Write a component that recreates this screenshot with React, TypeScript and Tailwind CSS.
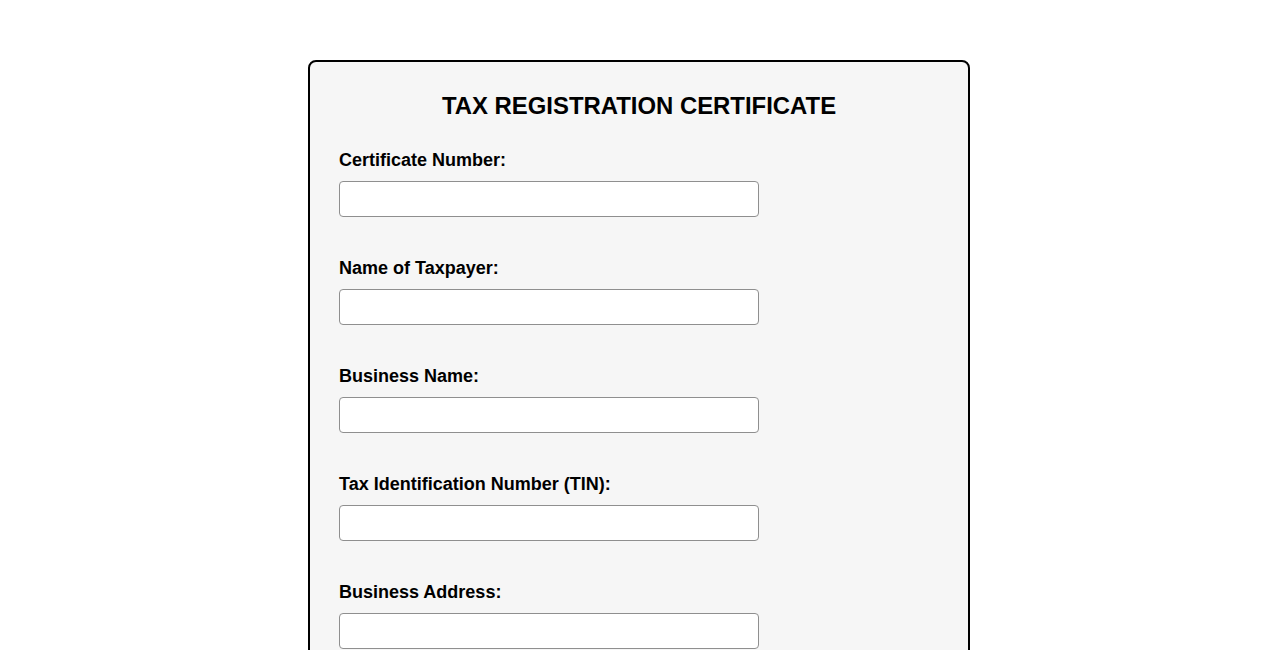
import React from "react";

const fields = [
  "Certificate Number:",
  "Name of Taxpayer:",
  "Business Name:",
  "Tax Identification Number (TIN):",
  "Business Address:",
];

export default function App() {
  return (
    <div className="min-h-screen bg-white pt-[60px] pb-10" style={{ fontFamily: '"Liberation Sans", Arial, sans-serif' }}>
      <div className="mx-auto w-[662px] rounded-[8px] border-2 border-black bg-[#f6f6f6] px-[29px] pt-[30px] pb-[30px] text-black">
        <h2 className="mb-[30px] text-center text-[23.9px] font-bold leading-[28px]">TAX REGISTRATION CERTIFICATE</h2>
        {fields.map((f) => (
          <div key={f} className="mb-[41px]">
            <label className="block text-[18px] font-bold leading-[21px]">{f}</label>
            <input
              type="text"
              className="mt-[10px] block h-[36px] w-[420px] rounded-[4px] border border-[#8f8f8f] bg-white px-2 text-[16px] outline-none"
            />
          </div>
        ))}
      </div>
    </div>
  );
}
